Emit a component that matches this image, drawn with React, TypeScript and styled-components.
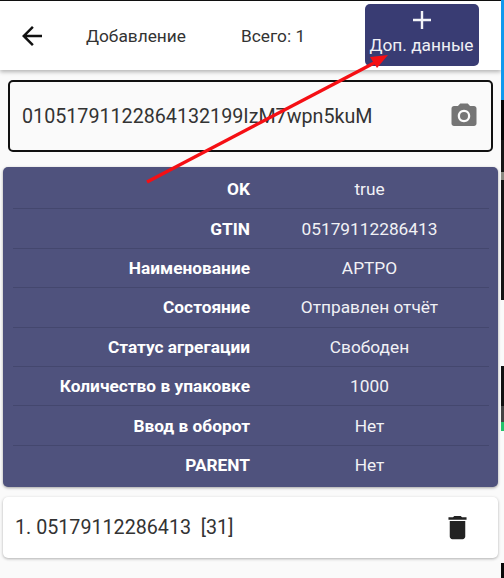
import styled, { createGlobalStyle } from "styled-components";
import { MdArrowBack, MdDelete, MdPhotoCamera } from "react-icons/md";

const GlobalStyle = createGlobalStyle`
  html, body {
    margin: 0;
    padding: 0;
    background: #fafafa;
  }
  * {
    box-sizing: border-box;
  }
`;

const Page = styled.div`
  position: relative;
  display: flex;
  width: 504px;
  height: 578px;
  overflow: hidden;
  font-family: Roboto, "Noto Sans", sans-serif;
`;

const Screen = styled.div`
  display: flex;
  flex-direction: column;
  width: 501px;
  background: #fafafa;
  border-top: 1px solid #111;
`;

const Header = styled.header`
  display: flex;
  align-items: center;
  height: 69px;
  flex-shrink: 0;
  background: #fff;
  box-shadow: 0 2px 4px rgba(0, 0, 0, 0.28);
  color: #222;
`;

const BackButton = styled.div`
  display: flex;
  width: 86px;
  padding-left: 17px;
  font-size: 30px;
  color: #111;
`;

const Title = styled.div`
  width: 155px;
  font-size: 17.3px;
  color: #333;
`;

const Total = styled.div`
  width: 124px;
  font-size: 17.3px;
  color: #333;
`;

const ExtraButton = styled.div`
  display: flex;
  flex-direction: column;
  align-items: center;
  width: 114px;
  height: 62px;
  margin-top: -1px;
  padding-right: 1px;
  border-radius: 5px;
  background: #393c73;
  color: #f0f0f5;
  font-size: 17.3px;
  line-height: 20px;
`;

const PlusIcon = styled.svg`
  width: 20px;
  height: 20px;
  margin: 6px 0 5px;
`;

const Scanner = styled.div`
  display: flex;
  align-items: center;
  justify-content: space-between;
  height: 72px;
  margin: 10px 8px 0 8px;
  padding: 0 12px 0 12px;
  border: 2px solid #111;
  border-radius: 5px;
  font-size: 19.7px;
  color: #333;
`;

const CameraIcon = styled.div`
  display: flex;
  font-size: 30px;
  color: #757575;
`;

const InfoTable = styled.div`
  width: 495px;
  height: 320px;
  margin: 15px 0 0 3px;
  padding: 3px 9px 0 10px;
  border-radius: 5px;
  background: #4f527d;
  box-shadow: 0 1px 3px rgba(0, 0, 0, 0.35);
`;

const InfoRow = styled.div`
  display: grid;
  grid-template-columns: 237px 1fr;
  align-items: center;
  height: 39.4px;
  color: #fff;
  font-size: 17.3px;

  &:not(:last-child) {
    border-bottom: 1px solid #44476e;
  }
`;

const InfoLabel = styled.div`
  font-weight: 700;
  text-align: right;
`;

const InfoValue = styled.div`
  text-align: center;
  color: #f1f1f5;
`;

const ItemCard = styled.div`
  display: flex;
  align-items: center;
  justify-content: space-between;
  width: 495px;
  height: 61px;
  margin: 10px 0 0 3px;
  padding: 0 25px 0 12px;
  border-radius: 5px;
  background: #fff;
  box-shadow: 0 1px 3px rgba(0, 0, 0, 0.3);
  font-size: 19.7px;
  color: #333;
  white-space: pre;
`;

const TrashIcon = styled.div`
  display: flex;
  font-size: 31px;
  color: #222;
`;

const EdgeStrip = styled.div`
  display: flex;
  flex-direction: column;
  width: 3px;
`;

const EdgePiece = styled.div<{ $h: number; $c: string }>`
  height: ${(p) => p.$h}px;
  background: ${(p) => p.$c};
`;

const ArrowOverlay = styled.svg`
  position: absolute;
  top: 0;
  left: 0;
  pointer-events: none;
`;

const rows = [
  ["OK", "true"],
  ["GTIN", "05179112286413"],
  ["Наименование", "АРТРО"],
  ["Состояние", "Отправлен отчёт"],
  ["Статус агрегации", "Свободен"],
  ["Количество в упаковке", "1000"],
  ["Ввод в оборот", "Нет"],
  ["PARENT", "Нет"],
];

const edge: [number, string][] = [
  [100, "#1199ee"],
  [40, "#050505"],
  [32, "#161616"],
  [8, "#8a8a80"],
  [120, "#141414"],
  [66, "#fafafa"],
  [40, "#111111"],
  [16, "#444444"],
  [9, "#1fc46a"],
  [132, "#fafafa"],
  [15, "#0a0a0a"],
];

const App = () => {
  return (
    <Page>
      <GlobalStyle />
      <Screen>
        <Header>
          <BackButton>
            <MdArrowBack />
          </BackButton>
          <Title>Добавление</Title>
          <Total>Всего: 1</Total>
          <ExtraButton>
            <PlusIcon viewBox="0 0 20 20">
              <path d="M10 1v18M1 10h18" stroke="#f4f4f8" strokeWidth="2.4" />
            </PlusIcon>
            Доп. данные
          </ExtraButton>
        </Header>
        <Scanner>
          01051791122864132199IzM7wpn5kuM
          <CameraIcon>
            <MdPhotoCamera />
          </CameraIcon>
        </Scanner>
        <InfoTable>
          {rows.map(([label, value]) => (
            <InfoRow key={label}>
              <InfoLabel>{label}</InfoLabel>
              <InfoValue>{value}</InfoValue>
            </InfoRow>
          ))}
        </InfoTable>
        <ItemCard>
          {"1. 05179112286413  [31]"}
          <TrashIcon>
            <MdDelete />
          </TrashIcon>
        </ItemCard>
      </Screen>
      <EdgeStrip>
        {edge.map(([h, c], i) => (
          <EdgePiece key={i} $h={h} $c={c} />
        ))}
      </EdgeStrip>
      <ArrowOverlay width="504" height="578" viewBox="0 0 504 578">
        <path d="M147 182L376 62" stroke="#f50f14" strokeWidth="3.4" fill="none" />
        <path d="M388 55L370 57L377 68Z" fill="#f50f14" />
      </ArrowOverlay>
    </Page>
  );
};

export default App;
